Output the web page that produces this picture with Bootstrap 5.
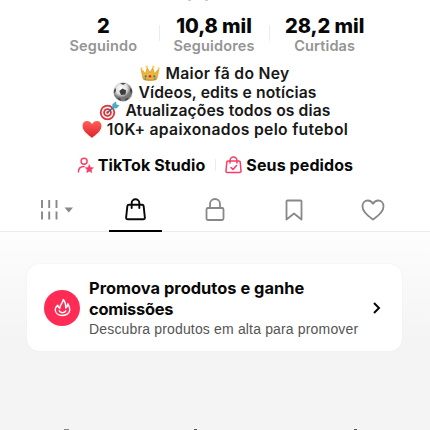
<!DOCTYPE html>
<html lang="pt-BR">
<head>
<meta charset="utf-8">
<meta name="viewport" content="width=device-width, initial-scale=1">
<title>Perfil</title>
<link href="https://cdn.jsdelivr.net/npm/bootstrap@5.3.0/dist/css/bootstrap.min.css" rel="stylesheet">
<style>
body{width:430px;height:430px;overflow:hidden;background:#fff;font-family:Inter,"Liberation Sans",sans-serif;color:#080808}
svg{display:block;flex:none}
.handle-tail{height:15px;padding-left:188px;gap:14px}
.handle-tail i{width:3px;height:1px;background:#ccc}
.stats{margin:0 50px 0 48px;height:41px}
.stat+.stat::before{content:"";position:absolute;left:0;top:10px;width:1px;height:16px;background:#ececec}
.num{font-size:20px;line-height:21px;font-weight:800;letter-spacing:-.05px;margin-top:1px}
.cap{font-size:14.5px;line-height:18px;font-weight:600;color:#949494;letter-spacing:.15px}
.bio{padding-top:8px;height:84px;font-weight:600;font-size:15.7px;letter-spacing:.31px;color:#181818}
.bio>div{height:18.7px;line-height:19px;gap:5px;white-space:nowrap}
.bio .snug{letter-spacing:.11px}
.links{height:34px;margin-top:8px;font-weight:700;font-size:16px;letter-spacing:.1px;white-space:nowrap}
.vsep{width:1px;height:12px;background:#ececec;margin:0 9px 0 10px}
.tabs{height:42px;margin-top:8px;padding:0 18px 0 17px;border-bottom:1px solid #ededed;color:#888}
.tab-item{width:79px;height:41px;padding-bottom:2px}
.tab-item.current{color:#080808}
.tab-item.current::after{content:"";position:absolute;bottom:-1px;left:13px;width:53px;height:2px;background:#000}
.panel{height:198px;background:linear-gradient(#fdfdfd,#f4f4f4 55%);padding:32px 28px 0 27px}
.promo{height:87px;border-radius:12px;border:0;box-shadow:0 0 1px #ddd;padding:0 21px 0 17px}
.flame{width:36px;height:36px;background:#fe2c55;margin-right:9px}
.promo-title{font-size:16.4px;font-weight:700;line-height:21px;letter-spacing:.03px;white-space:nowrap}
.promo-title .snug{letter-spacing:-.25px}
.promo-copy{font:14px/18px "Liberation Sans",sans-serif;letter-spacing:.16px;color:#555;white-space:nowrap}
.next-title{height:79px}
.next-title i{position:absolute;bottom:0;height:1px;background:#555;width:3px}
.next-title .n1{left:64px;width:5px;background:#888}
.next-title .n2{left:194px}
.next-title .n3{left:354px}
</style>
<script src="https://cdn.jsdelivr.net/npm/bootstrap@5.3.0/dist/js/bootstrap.bundle.min.js"></script>
</head>
<body>
<div class="handle-tail d-flex" aria-hidden="true"><i></i><i></i></div>
<section class="stats row g-0 text-center">
  <div class="stat col position-relative"><div class="num">2</div><div class="cap">Seguindo</div></div>
  <div class="stat col position-relative"><div class="num">10,8 mil</div><div class="cap">Seguidores</div></div>
  <div class="stat col position-relative"><div class="num">28,2 mil</div><div class="cap">Curtidas</div></div>
</section>
<section class="bio">
  <div class="d-flex justify-content-center align-items-center">
    <svg width="20" height="18" viewBox="0 0 21 19"><path d="M3 15 1 5l5 5 1.500-6 3 5 3-5L15 10l5-5-2 10Z" fill="#efb733" stroke="#c98b20" stroke-width=".6"/><path d="M3 14q7.500 3 15 0l-.5 3q-7 2-14 0Z" fill="#dca028"/><g fill="#f8d55b"><circle cx="1.500" cy="4.500" r="1.200"/><circle cx="7" cy="3" r="1.300"/><circle cx="14" cy="3" r="1.300"/><circle cx="19.500" cy="4.500" r="1.200"/></g><circle cx="10.500" cy="13" r="1.400" fill="#cc3158"/><circle cx="6" cy="13" r="1.200" fill="#297fb5"/><circle cx="15" cy="13" r="1.200" fill="#297fb5"/><circle cx="5.500" cy="16" r=".8" fill="#3c9f70"/><circle cx="15.500" cy="16" r=".8" fill="#3c9f70"/></svg>
    <span>Maior fã do Ney</span></div>
  <div class="d-flex justify-content-center align-items-center">
    <svg width="20" height="20" viewBox="0 0 20 20"><defs><radialGradient id="ball" cx=".4" cy=".3"><stop stop-color="#fff"/><stop offset=".65" stop-color="#ddd"/><stop offset="1" stop-color="#777"/></radialGradient></defs><circle cx="10" cy="10" r="9.300" fill="url(#ball)" stroke="#999" stroke-width=".4"/><path d="m9.500 6.500 3.700 2-.8 4.100-4.400.4-1.700-4ZM7 1.500q3-1 6 0l-3 1.300ZM1 8l2-2-.3 3.500L1.500 12ZM19 8l-2-2 .3 3.500L18.500 12ZM5 16l2.500.7.5 2-3.500-1.600ZM15 16l-2.500.7-.5 2 3.500-1.600Z" fill="#3a3d41"/></svg>
    <span class="snug">Vídeos, edits e notícias</span></div>
  <div class="d-flex justify-content-center align-items-center">
    <svg width="21" height="20" viewBox="0 0 21 20"><circle cx="8.500" cy="11.500" r="7.700" fill="#d9363f"/><circle cx="8.500" cy="11.500" r="5.900" fill="#f2eeee"/><circle cx="8.500" cy="11.500" r="4.300" fill="#d9363f"/><circle cx="8.500" cy="11.500" r="2.500" fill="#f2eeee"/><circle cx="8.500" cy="11.500" r="1.200" fill="#d9363f"/><path d="m8.500 11.500 8-7" stroke="#276b86" stroke-width="1.200"/><path d="m13 7 .5-4L17 .5l.5 3 3 .7-3 3.300Z" fill="#48adc5"/></svg>
    <span class="snug">Atualizações todos os dias</span></div>
  <div class="d-flex justify-content-center align-items-center">
    <svg width="20" height="19" viewBox="0 0 20 19"><defs><linearGradient id="love" x2="0" y2="1"><stop stop-color="#ff6158"/><stop offset="1" stop-color="#df2028"/></linearGradient></defs><path d="M10 18C7 15 .5 11.500.5 6 .5 2.800 2.600 1 5 1c2.200 0 4 1.200 5 3.300C11 2.200 12.800 1 15 1c2.400 0 4.500 1.800 4.500 5 0 5.500-6.500 9-9.500 12Z" fill="url(#love)"/></svg>
    <span>10K+ apaixonados pelo futebol</span></div>
</section>
<section class="links d-flex justify-content-center align-items-center">
  <svg class="me-1" width="17" height="17" viewBox="0 0 18 18" fill="none" stroke="#f83c64" stroke-width="1.500" stroke-linecap="round"><circle cx="7.500" cy="4.500" r="3.200"/><path d="M1.500 16c0-4 2.500-6 6-6"/><path d="m13 8.300 1.300 2.700 3 .4-2.200 2.100.6 3-2.700-1.500-2.700 1.500.6-3-2.200-2.100 3-.4Z" fill="#f83c64" stroke="#f83c64" stroke-width=".6"/></svg>
  <span>TikTok Studio</span><span class="vsep"></span>
  <svg class="me-1" width="17" height="18" viewBox="0 0 17 18" fill="none" stroke="#f83c64" stroke-width="1.500" stroke-linecap="round" stroke-linejoin="round"><path d="M3 5h11q1 0 1.200 1l.8 9q.1 1.500-1.300 1.500H2.300Q.9 16.500 1 15l.8-9Q2 5 3 5ZM5 7V4.500a3.500 3.500 0 0 1 7 0V7M6 11.500l2 2 3.500-4"/></svg>
  <span>Seus pedidos</span>
</section>
<nav class="tabs d-flex">
  <div class="tab-item d-flex align-items-center justify-content-center"><svg width="34" height="22" viewBox="0 0 34 22"><path d="M2 1v8M9.200 1v8M16.500 1v8M2 12.500v8M9.200 12.500v8M16.500 12.500v8" stroke="currentColor" stroke-width="1.900"/><path d="M24.500 8.500h8.500l-4.200 5Z" fill="currentColor"/></svg></div>
  <div class="tab-item current position-relative d-flex align-items-center justify-content-center"><svg width="21" height="23" viewBox="0 0 22 24" fill="none" stroke="currentColor" stroke-width="2" stroke-linecap="round" stroke-linejoin="round"><path d="M4 7h14q1.300 0 1.500 1.300l1.300 12Q21 22.200 19 22.200H3Q1 22.200 1.200 20.300l1.300-12Q2.700 7 4 7ZM7 10.500V5.300a4 4 0 0 1 8 0v5.200"/></svg></div>
  <div class="tab-item d-flex align-items-center justify-content-center"><svg width="20" height="23" viewBox="0 0 20 23" fill="none" stroke="currentColor" stroke-width="1.800"><rect x="1.500" y="10" width="17" height="12" rx="1.500"/><path d="M5 10V6a5 5 0 0 1 10 0v4"/></svg></div>
  <div class="tab-item d-flex align-items-center justify-content-center"><svg width="18" height="22" viewBox="0 0 18 22" fill="none" stroke="currentColor" stroke-width="1.800" stroke-linejoin="round"><path d="M2.500 1.500h13q1 0 1 1v18L9 14.500 1.500 20.500v-18q0-1 1-1Z"/></svg></div>
  <div class="tab-item d-flex align-items-center justify-content-center"><svg width="24" height="22" viewBox="0 0 24 22" fill="none" stroke="currentColor" stroke-width="1.800" stroke-linejoin="round"><path d="M12 20.500C8.500 18 1.500 13.500 1.500 7.500c0-3.500 2.300-6 5.300-6 2.200 0 4 1.200 5.200 3.300 1.200-2.100 3-3.300 5.200-3.300 3 0 5.300 2.500 5.300 6 0 6-7 10.500-10.500 13Z"/></svg></div>
</nav>
<main class="panel position-relative">
  <div class="promo card flex-row align-items-center">
    <div class="flame rounded-circle d-flex align-items-center justify-content-center flex-shrink-0"><svg width="17" height="19" viewBox="0 0 18 20" fill="none" stroke="#fff" stroke-width="1.500" stroke-linejoin="round" stroke-linecap="round"><path d="M9.800 1.500C9.800 5 6.300 6.500 6 11 4.500 10 4 8.800 4 7.500 2.300 9 1.300 10.500 1.300 12.500c0 3.800 3.500 6 7.700 6s7.700-2.400 7.700-6.300c0-2.500-1-4.500-2.200-6.200-.1 2-.7 3.500-2 4.500C12.400 6.500 11.800 3.500 9.800 1.500ZM5.500 13.500c.5 1.300 1.800 2 3.500 2s3-.7 3.500-2"/></svg></div>
    <div class="flex-grow-1"><div class="promo-title">Promova produtos e ganhe<br><span class="snug">comissões</span></div><div class="promo-copy">Descubra produtos em alta para promover</div></div>
    <svg width="8" height="12" viewBox="0 0 8 12" fill="none" stroke="#080808" stroke-width="2"><path d="m1 1 5 5-5 5"/></svg>
  </div>
  <div class="next-title" aria-hidden="true"><i class="n1"></i><i class="n2"></i><i class="n3"></i></div>
</main>
</body>
</html>
